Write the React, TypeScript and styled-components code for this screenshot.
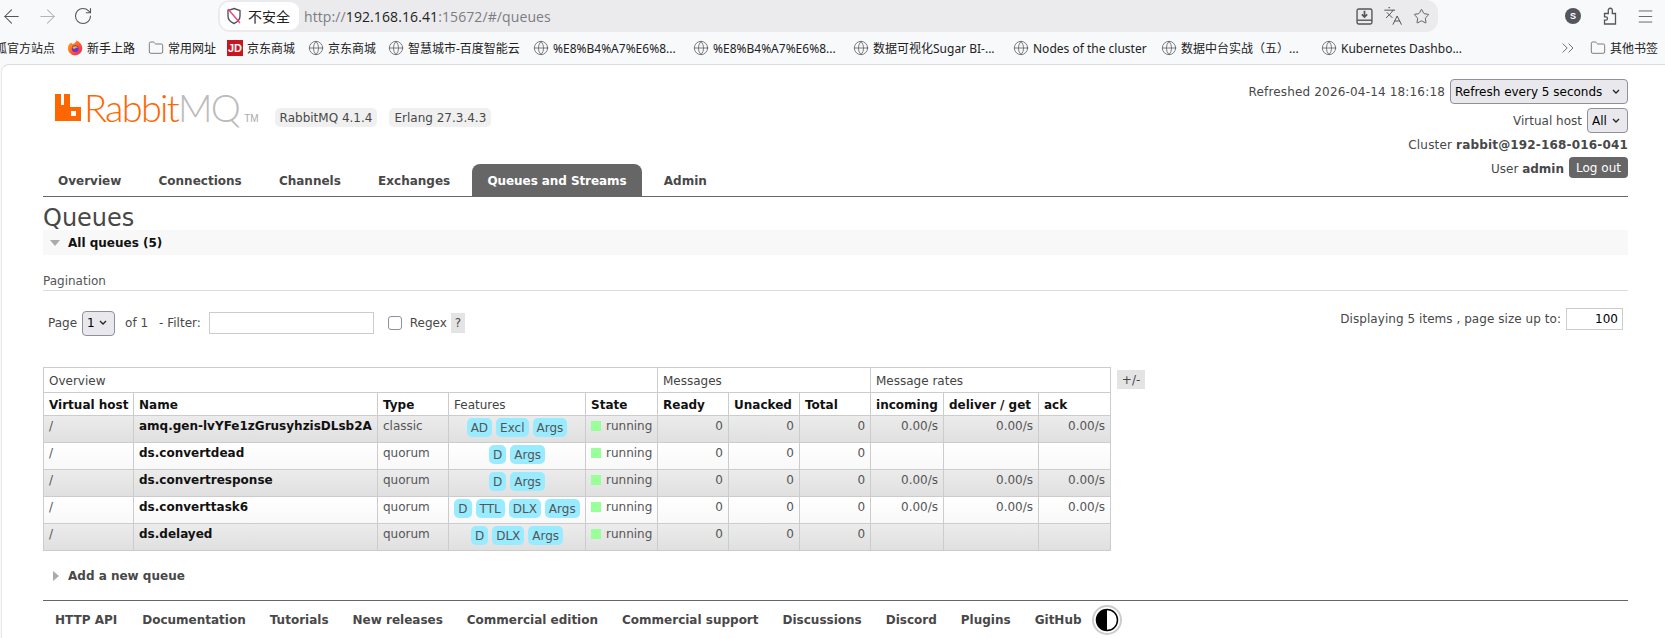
import React from "react";
import styled, { createGlobalStyle } from "styled-components";
import { ArrowLeft, ArrowRight, RotateCw, Folder, Globe, Star, Languages, ChevronsRight, Menu } from "lucide-react";

const Global = createGlobalStyle`
  html, body { margin: 0; padding: 0; height: 638px; overflow: hidden; background: #f8f9fb; }
  * { box-sizing: border-box; }
`;

const Root = styled.div`
  width: 1665px;
  height: 638px;
  overflow: hidden;
  display: flex;
  flex-direction: column;
  font-family: "DejaVu Sans", Verdana, sans-serif;
  font-size: 12px;
  color: #484848;
`;

/* ---------- browser chrome ---------- */
const Toolbar = styled.div`
  height: 32px;
  flex: none;
  display: flex;
  align-items: center;
  background: #f8f9fb;
  margin-left: -7px;
`;
const NavButton = styled.div<{ $off?: boolean }>`
  width: 36px;
  height: 32px;
  flex: none;
  display: flex;
  align-items: center;
  justify-content: center;
  color: ${(p) => (p.$off ? "#b4b4ba" : "#55555c")};
`;
const AddressBar = styled.div`
  margin-left: 117px;
  width: 1220px;
  height: 32px;
  flex: none;
  display: flex;
  align-items: center;
  background: #ebebed;
  border-radius: 12px;
  padding: 0 8px 0 2px;
`;
const SecurityChip = styled.div`
  width: 79px;
  height: 28px;
  border-radius: 9px;
  background: #fff;
  display: flex;
  align-items: center;
  gap: 6px;
  padding-left: 6px;
  font: 14px "Noto Sans CJK SC", sans-serif;
  color: #222;
`;
const Url = styled.div`
  margin-left: 5px;
  flex: 1;
  font: 14px "Open Sans", "Noto Sans", sans-serif;
  letter-spacing: 0.1px;
  color: #7c7c82;
  b { font-weight: 400; color: #222; }
`;
const BarIcons = styled.div`
  display: flex;
  align-items: center;
  gap: 10px;
  color: #55555c;
`;
const ToolRight = styled.div`
  margin-left: 127px;
  flex: none;
  display: flex;
  align-items: center;
  color: #55555c;
`;
const Profile = styled.div`
  width: 16px;
  height: 16px;
  border-radius: 50%;
  background: #55555c;
  color: #fff;
  font: 700 9px "Liberation Sans", sans-serif;
  display: flex;
  align-items: center;
  justify-content: center;
`;
const ExtSlot = styled.div<{ $l: number }>`
  margin-left: ${(p) => p.$l}px;
  width: 28px;
  display: flex;
  justify-content: center;
`;

const Bookmarks = styled.div`
  height: 32px;
  flex: none;
  display: flex;
  align-items: center;
  background: #f8f9fb;
  font: 12px "Noto Sans", "Noto Sans CJK SC", sans-serif;
  color: #222;
  gap: 12px;
  margin-left: -5px;
`;
const Bookmark = styled.div<{ $w: number }>`
  width: ${(p) => p.$w}px;
  flex: none;
  display: flex;
  align-items: center;
  gap: 4px;
  white-space: nowrap;
  svg { flex: none; color: #5e5e64; }
`;
const BookmarksEnd = styled.div`
  margin-left: 83px;
  flex: none;
  display: flex;
  align-items: center;
  color: #66666c;
`;
const JdIcon = styled.span`
  width: 16px;
  height: 16px;
  flex: none;
  background: #c9151e;
  color: #fff;
  font: 700 11px "Liberation Sans", sans-serif;
  display: flex;
  align-items: center;
  justify-content: center;
`;

/* ---------- page ---------- */
const Page = styled.div`
  flex: 1;
  margin-left: 1px;
  background: #fff;
  border-top: 1px solid #dcdcdf;
  border-left: 1px solid #e6e6e8;
  border-top-left-radius: 8px;
  padding: 0 37px 0 41px;
  display: flex;
  flex-direction: column;
`;
const Header = styled.header`
  height: 99px;
  flex: none;
  display: flex;
  justify-content: space-between;
`;
const Brand = styled.div`
  display: flex;
  align-items: flex-start;
  padding: 29px 0 0 12px;
`;
const LogoWord = styled.div`
  margin-left: 3px;
  font: 300 38px/27px "Lato", "Open Sans", sans-serif;
  letter-spacing: -1.75px;
  color: #f60;
  i { font-style: normal; color: #bbb; }
`;
const Tm = styled.span`
  font: 10px/10px "Liberation Sans", sans-serif;
  color: #aaa;
  margin: 20px 0 0 5px;
`;
const Badges = styled.div`
  display: flex;
  gap: 12px;
  margin: 14px 0 0 16px;
`;
const Badge = styled.span`
  height: 19px;
  padding: 0 5px;
  border-radius: 5px;
  background: #f0f0f0;
  display: flex;
  align-items: center;
`;
const Status = styled.div`
  padding-top: 14px;
  display: flex;
  flex-direction: column;
  align-items: flex-end;
`;
const StatusRow = styled.div<{ $h: number; $lh: number }>`
  height: ${(p) => p.$h}px;
  flex: none;
  display: flex;
  align-items: flex-start;
  gap: 5px;
  line-height: ${(p) => p.$lh}px;
`;
const Stamp = styled.span`
  letter-spacing: 0.17px;
`;
const Select = styled.select<{ $w: number; $h: number }>`
  appearance: none;
  width: ${(p) => p.$w}px;
  height: ${(p) => p.$h}px;
  padding: 0 0 0 4px;
  font: 12px "DejaVu Sans", sans-serif;
  color: #000;
  background-color: #e9e9ed;
  background-image: url("data:image/svg+xml,%3Csvg xmlns='http://www.w3.org/2000/svg' width='8' height='6'%3E%3Cpath d='M1 1l3 3 3-3' fill='none' stroke='%23222' stroke-width='1.3'/%3E%3C/svg%3E");
  background-repeat: no-repeat;
  background-position: right 7px center;
  border: 1px solid #8f8f9d;
  border-radius: 4px;
`;
const LogOut = styled.button`
  height: 21px;
  width: 59px;
  padding: 0;
  border: 0;
  border-radius: 4px;
  background: #666;
  color: #fff;
  font: 12px "DejaVu Sans", sans-serif;
`;
const Tabs = styled.nav`
  height: 33px;
  flex: none;
  display: flex;
  gap: 7.25px;
  border-bottom: 1px solid #666;
`;
const Tab = styled.a<{ $active?: boolean }>`
  height: 32px;
  padding: 1px 15px 0;
  display: flex;
  align-items: center;
  font-weight: 700;
  letter-spacing: ${(p) => (p.$active ? "-0.08px" : "0")};
  color: ${(p) => (p.$active ? "#fff" : "#484848")};
  background: ${(p) => (p.$active ? "#666" : "transparent")};
  border-radius: 8px 8px 0 0;
`;
const Title = styled.h1`
  margin: 0;
  height: 33px;
  flex: none;
  font-size: 24px;
  font-weight: 400;
  line-height: 42px;
  color: #484848;
`;
const SectionBar = styled.div`
  height: 25px;
  flex: none;
  background: #f8f8f8;
  display: flex;
  align-items: center;
  gap: 8px;
  padding-left: 7px;
  font-weight: 700;
  color: #111;
`;
const TriangleDown = styled.span`
  width: 0;
  height: 0;
  border-left: 5px solid transparent;
  border-right: 5px solid transparent;
  border-top: 6px solid #aaa;
`;
const Subhead = styled.h3`
  margin: 17px 0 0;
  height: 19px;
  flex: none;
  font-size: 12px;
  font-weight: 400;
  line-height: 19px;
  border-bottom: 1px solid #ddd;
  color: #555;
`;
const Pager = styled.div`
  height: 76px;
  flex: none;
  display: flex;
  justify-content: space-between;
`;
const PagerLeft = styled.div`
  display: flex;
  align-items: center;
  height: 26px;
  margin-top: 19px;
  padding-left: 5px;
`;
const PageSize = styled.div`
  display: flex;
  align-items: center;
  gap: 5px;
  height: 22px;
  margin: 17px 5px 0 0;
  letter-spacing: 0.05px;
`;
const Inline = styled.span<{ $l: number }>`
  margin-left: ${(p) => p.$l}px;
`;
const FilterInput = styled.input`
  width: 165px;
  height: 22px;
  margin-left: 8px;
  border: 1px solid #ccc;
  padding: 0 4px;
`;
const Check = styled.input`
  appearance: none;
  width: 14px;
  height: 14px;
  margin: 0 0 0 14px;
  border: 1px solid #8f8f9d;
  border-radius: 3px;
  background: #fff;
`;
const Help = styled.span`
  width: 14px;
  height: 20px;
  margin-left: 4px;
  background: #e4e4e4;
  display: flex;
  align-items: center;
  justify-content: center;
`;
const SizeInput = styled.input`
  width: 57px;
  height: 22px;
  border: 1px solid #ccc;
  padding: 0 4px;
  text-align: right;
  font: 12px "DejaVu Sans", sans-serif;
  color: #000;
`;
const TableArea = styled.div`
  display: flex;
  flex: none;
  align-items: flex-start;
  gap: 6px;
`;
const Queues = styled.table`
  table-layout: fixed;
  width: 1067px;
  border-collapse: collapse;
  border: 1px solid #ccc;
  flex: none;
  font-size: 12px;
`;
const GroupHead = styled.th`
  height: 25px;
  padding: 1px 5px 0;
  border: 1px solid #ccc;
  text-align: left;
  font-weight: 400;
  color: #444;
`;
const ColHead = styled.th<{ $plain?: boolean }>`
  height: 23px;
  padding: 1px 5px 0;
  border: 1px solid #ccc;
  text-align: left;
  font-weight: ${(p) => (p.$plain ? 400 : 700)};
  color: ${(p) => (p.$plain ? "#444" : "#111")};
  white-space: nowrap;
`;
const Row = styled.tr<{ $alt: boolean }>`
  height: 27px;
  background: ${(p) =>
    p.$alt ? "linear-gradient(#ececec, #dfdfdf)" : "linear-gradient(#ffffff, #f8f8f8)"};
`;
const Cell = styled.td<{ $num?: boolean }>`
  padding: 3px 5px 0;
  border: 1px solid #ccc;
  vertical-align: top;
  line-height: 15px;
  text-align: ${(p) => (p.$num ? "right" : "left")};
  color: #555;
  white-space: nowrap;
`;
const NameCell = styled(Cell)`
  font-weight: 700;
  color: #111;
  overflow: hidden;
`;
const PillCell = styled.td`
  padding: 2px 0 0;
  border: 1px solid #ccc;
  vertical-align: top;
`;
const Pills = styled.div`
  display: flex;
  justify-content: center;
  gap: 4px;
`;
const Pill = styled.span`
  height: 19px;
  padding: 0 4px;
  border-radius: 5px;
  background: #99ebff;
  color: #555;
  display: flex;
  align-items: center;
`;
const Dot = styled.span`
  display: inline-block;
  width: 10px;
  height: 10px;
  margin-right: 5px;
  background: #99ff99;
  vertical-align: -1px;
`;
const Toggle = styled.span`
  width: 28px;
  height: 19px;
  margin-top: 3px;
  background: #e4e4e4;
  display: flex;
  align-items: center;
  justify-content: center;
`;
const AddSection = styled.div`
  height: 49px;
  flex: none;
  display: flex;
  align-items: center;
  gap: 9px;
  padding: 1px 0 0 10px;
  font-weight: 700;
  color: #484848;
`;
const TriangleRight = styled.span`
  width: 0;
  height: 0;
  border-top: 5px solid transparent;
  border-bottom: 5px solid transparent;
  border-left: 6px solid #aaa;
`;
const Footer = styled.footer`
  border-top: 1px solid #666;
  height: 38px;
  flex: none;
  display: flex;
  align-items: center;
  gap: 24px;
  padding-left: 12px;
  font-weight: 700;
  color: #484848;
`;
const FooterLink = styled.a`
  &:first-child { margin-right: 1px; }
`;
const ThemeSwitch = styled.svg`
  margin-left: -14px;
  flex: none;
`;

const bookmarks = [
  { t: "京东商城", w: 68 },
  { t: "智慧城市-百度智能云", w: 133 },
  { t: "%E8%B4%A7%E6%8...", w: 148 },
  { t: "%E8%B4%A7%E6%8...", w: 148 },
  { t: "数据可视化Sugar BI-...", w: 148 },
  { t: "Nodes of the cluster", w: 136 },
  { t: "数据中台实战（五）...", w: 148 },
  { t: "Kubernetes Dashbo...", w: 142 },
];

type Q = { name: string; type: string; features: string[]; rates: boolean };
const queues: Q[] = [
  { name: "amq.gen-lvYFe1zGrusyhzisDLsb2A", type: "classic", features: ["AD", "Excl", "Args"], rates: true },
  { name: "ds.convertdead", type: "quorum", features: ["D", "Args"], rates: false },
  { name: "ds.convertresponse", type: "quorum", features: ["D", "Args"], rates: true },
  { name: "ds.converttask6", type: "quorum", features: ["D", "TTL", "DLX", "Args"], rates: true },
  { name: "ds.delayed", type: "quorum", features: ["D", "DLX", "Args"], rates: false },
];

const colWidths = [90, 244, 71, 137, 72, 71, 71, 71, 73, 95, 72];
const tabs = ["Overview", "Connections", "Channels", "Exchanges", "Queues and Streams", "Admin"];
const links = ["HTTP API", "Documentation", "Tutorials", "New releases", "Commercial edition", "Commercial support", "Discussions", "Discord", "Plugins", "GitHub"];

export default function App() {
  return (
    <Root>
      <Global />
      <Toolbar>
        <NavButton><ArrowLeft size={23} strokeWidth={1.1} /></NavButton>
        <NavButton $off><ArrowRight size={23} strokeWidth={1.1} /></NavButton>
        <NavButton><RotateCw size={20} strokeWidth={1.3} /></NavButton>
        <AddressBar>
          <SecurityChip>
            <svg width="16" height="18" viewBox="0 0 16 18">
              <path d="M8 1.500 14 3.500V9c0 3.500-2.500 6-6 7.500C4.500 15 2 12.500 2 9V3.500Z" fill="none" stroke="#55555c" strokeWidth="1.4" />
              <path d="M2 2 14 16" stroke="#e8467c" strokeWidth="1.4" />
            </svg>
            不安全
          </SecurityChip>
          <Url>http://<b>192.168.16.41</b>:15672/#/queues</Url>
          <BarIcons>
            <svg width="17" height="17" viewBox="0 0 16 16" fill="none" stroke="#55555c" strokeWidth="1.3">
              <rect x="1" y="1" width="14" height="14" rx="1.500" />
              <path d="M1 11.500h14" />
              <path d="M8 2.500v6M5.500 6 8 8.500 10.500 6" strokeWidth="1.600" />
            </svg>
            <Languages size={20} strokeWidth={1.2} />
            <Star size={17} strokeWidth={1.3} />
          </BarIcons>
        </AddressBar>
        <ToolRight>
          <Profile>S</Profile>
          <ExtSlot $l={15}>
            <svg width="15" height="18" viewBox="0 0 15 18" fill="none" stroke="#55555c" strokeWidth="1.3">
              <path d="M1.500 17h11V6.500H9.300V4a2.100 2.100 0 1 0-4 0v2.500H1.500v3.300h1.300a1.700 1.700 0 1 1 0 3.400H1.500Z" />
            </svg>
          </ExtSlot>
          <ExtSlot $l={7}><Menu size={19} strokeWidth={1.1} /></ExtSlot>
        </ToolRight>
      </Toolbar>
      <Bookmarks>
        <Bookmark $w={60}>狐官方站点</Bookmark>
        <Bookmark $w={69}>
          <svg width="16" height="16" viewBox="0 0 16 16">
            <defs>
              <linearGradient id="fx" x1="0" y1="0" x2="1" y2="1">
                <stop offset="0" stopColor="#ffb31a" />
                <stop offset="0.55" stopColor="#ff5a2c" />
                <stop offset="1" stopColor="#e5167e" />
              </linearGradient>
            </defs>
            <path d="M8 15.500a7.300 7.300 0 0 1-7-8.600C1.600 4.500 3 3.300 4.300 2.800 5 3 5 4 5.800 4.100 7.300 3.500 8.800 2.200 9.500.5 13 2 15.300 4.800 15.300 8.200A7.300 7.300 0 0 1 8 15.500Z" fill="url(#fx)" />
            <circle cx="8.200" cy="8.700" r="3.400" fill="#6e35c9" />
            <path d="M5.500 7.200C7 5.600 10.500 5.800 11.500 8c-1-.8-2.500-.6-3 .2L6.500 9Z" fill="#ffb31a" />
          </svg>
          新手上路
        </Bookmark>
        <Bookmark $w={67}><Folder size={16} strokeWidth={1.2} />常用网址</Bookmark>
        <Bookmark $w={69}><JdIcon>JD</JdIcon>京东商城</Bookmark>
        {bookmarks.map((b, i) => (
          <Bookmark key={i} $w={b.w}><Globe size={16} strokeWidth={1.2} />{b.t}</Bookmark>
        ))}
        <BookmarksEnd>
          <ChevronsRight size={20} strokeWidth={1.1} />
        </BookmarksEnd>
        <Bookmark $w={70}><Folder size={16} strokeWidth={1.2} />其他书签</Bookmark>
      </Bookmarks>
      <Page>
        <Header>
          <Brand>
            <svg width="26" height="27" viewBox="0 0 26 27">
              <path fill="#f60" fillRule="evenodd" d="M0 0h6v11h3V0h6v13h11v14H0ZM16 17v5h5v-5Z" />
            </svg>
            <LogoWord>Rabbit<i>MQ</i></LogoWord>
            <Tm>TM</Tm>
            <Badges>
              <Badge>RabbitMQ 4.1.4</Badge>
              <Badge>Erlang 27.3.4.3</Badge>
            </Badges>
          </Brand>
          <Status>
            <StatusRow $h={29} $lh={26}>
              <Stamp>Refreshed 2026-04-14 18:16:18</Stamp>
              <Select $w={178} $h={25} defaultValue="5"><option value="5">Refresh every 5 seconds</option></Select>
            </StatusRow>
            <StatusRow $h={25} $lh={26}>
              Virtual host
              <Select $w={41} $h={25} defaultValue="all"><option value="all">All</option></Select>
            </StatusRow>
            <StatusRow $h={24} $lh={24}>
              <Stamp>Cluster <b>rabbit@192-168-016-041</b></Stamp>
            </StatusRow>
            <StatusRow $h={21} $lh={24}>
              <span>User <b>admin</b></span>
              <LogOut>Log out</LogOut>
            </StatusRow>
          </Status>
        </Header>
        <Tabs>
          {tabs.map((t) => (
            <Tab key={t} $active={t === "Queues and Streams"}>{t}</Tab>
          ))}
        </Tabs>
        <Title>Queues</Title>
        <SectionBar><TriangleDown />All queues (5)</SectionBar>
        <Subhead>Pagination</Subhead>
        <Pager>
          <PagerLeft>
            <span>Page</span>
            <Inline $l={5}><Select $w={33} $h={25} defaultValue="1"><option value="1">1</option></Select></Inline>
            <Inline $l={10}>of 1</Inline>
            <Inline $l={11}>- Filter:</Inline>
            <FilterInput />
            <Check type="checkbox" />
            <Inline $l={8}>Regex</Inline>
            <Help>?</Help>
          </PagerLeft>
          <PageSize>
            Displaying 5 items , page size up to:
            <SizeInput defaultValue="100" />
          </PageSize>
        </Pager>
        <TableArea>
          <Queues>
            <colgroup>
              {colWidths.map((w, i) => <col key={i} style={{ width: w }} />)}
            </colgroup>
            <thead>
              <tr>
                <GroupHead colSpan={5}>Overview</GroupHead>
                <GroupHead colSpan={3}>Messages</GroupHead>
                <GroupHead colSpan={3}>Message rates</GroupHead>
              </tr>
              <tr>
                <ColHead>Virtual host</ColHead>
                <ColHead>Name</ColHead>
                <ColHead>Type</ColHead>
                <ColHead $plain>Features</ColHead>
                <ColHead>State</ColHead>
                <ColHead>Ready</ColHead>
                <ColHead>Unacked</ColHead>
                <ColHead>Total</ColHead>
                <ColHead>incoming</ColHead>
                <ColHead>deliver / get</ColHead>
                <ColHead>ack</ColHead>
              </tr>
            </thead>
            <tbody>
              {queues.map((q, i) => (
                <Row key={q.name} $alt={i % 2 === 0}>
                  <Cell>/</Cell>
                  <NameCell>{q.name}</NameCell>
                  <Cell>{q.type}</Cell>
                  <PillCell>
                    <Pills>{q.features.map((f) => <Pill key={f}>{f}</Pill>)}</Pills>
                  </PillCell>
                  <Cell><Dot />running</Cell>
                  <Cell $num>0</Cell>
                  <Cell $num>0</Cell>
                  <Cell $num>0</Cell>
                  <Cell $num>{q.rates ? "0.00/s" : ""}</Cell>
                  <Cell $num>{q.rates ? "0.00/s" : ""}</Cell>
                  <Cell $num>{q.rates ? "0.00/s" : ""}</Cell>
                </Row>
              ))}
            </tbody>
          </Queues>
          <Toggle>+/-</Toggle>
        </TableArea>
        <AddSection><TriangleRight />Add a new queue</AddSection>
        <Footer>
          {links.map((l) => <FooterLink key={l}>{l}</FooterLink>)}
          <ThemeSwitch width="30" height="30" viewBox="0 0 30 30">
            <circle cx="15" cy="15" r="14" fill="#fff" stroke="#ccc" strokeWidth="2" />
            <circle cx="15" cy="15" r="10.500" fill="#fff" stroke="#000" strokeWidth="1.500" />
            <path d="M15 4.500a10.500 10.500 0 0 0 0 21Z" fill="#000" />
          </ThemeSwitch>
        </Footer>
      </Page>
    </Root>
  );
}
